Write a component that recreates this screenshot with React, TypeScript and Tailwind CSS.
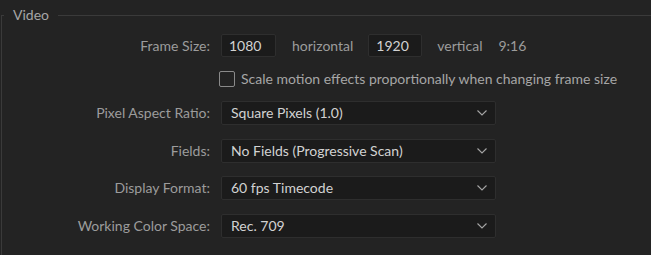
import React from "react";

function Chevron() {
  return (
    <svg width="10" height="6" viewBox="0 0 10 6" fill="none" className="shrink-0">
      <path d="M0.5 0.5 L5 5 L9.5 0.5" stroke="#a5a5a5" strokeWidth="1.1" />
    </svg>
  );
}

function Row({ label, value, className }: { label: string; value: string; className: string }) {
  return (
    <div className={`flex items-center h-[24px] ${className}`}>
      <div className="w-[208px] text-right text-[#9c9c9c]">{label}</div>
      <div className="ml-[11px] w-[275px] h-[24px] flex items-center justify-between bg-[#1b1b1b] border border-[#2e2e2e] rounded-[2px] pl-[9px] pr-[8px] text-[#d2d2d2]">
        <span>{value}</span>
        <Chevron />
      </div>
    </div>
  );
}

export default function App() {
  return (
    <div
      className="w-[651px] h-[255px] bg-[#232323] overflow-hidden text-[14px] leading-[20px]"
      style={{ fontFamily: "Lato, 'Liberation Sans', sans-serif" }}
    >
      <fieldset className="mt-[5px] ml-[1px] border-t border-l border-[#3a3a3a] h-[260px]">
        <legend className="ml-[2px] px-[9px] text-[#a6a6a6] leading-[20px]">Video</legend>
        <div className="flex items-center h-[23px] mt-[9px]">
          <div className="w-[208px] text-right text-[#9c9c9c]">Frame Size:</div>
          <div className="ml-[11px] w-[55px] h-[23px] bg-[#1b1b1b] border border-[#2e2e2e] rounded-[2px] pl-[7px] flex items-center text-[#d2d2d2]">
            1080
          </div>
          <div className="ml-[16px] text-[#9c9c9c]">horizontal</div>
          <div className="ml-[15px] w-[54px] h-[23px] bg-[#1b1b1b] border border-[#2e2e2e] rounded-[2px] pl-[7px] flex items-center text-[#d2d2d2]">
            1920
          </div>
          <div className="ml-[15px] text-[#9c9c9c]">vertical</div>
          <div className="ml-[16px] text-[#9c9c9c]">9:16</div>
        </div>
        <div className="flex items-center h-[16px] mt-[14px]">
          <div className="ml-[217px] w-[16px] h-[16px] border border-[#8a8a8a] rounded-[2px] bg-[#232323]" />
          <div className="ml-[6px] text-[#a6a6a6]">
            Scale motion effects proportionally when changing frame size
          </div>
        </div>
        <Row label="Pixel Aspect Ratio:" value="Square Pixels (1.0)" className="mt-[14px]" />
        <Row label="Fields:" value="No Fields (Progressive Scan)" className="mt-[14px]" />
        <Row label="Display Format:" value="60 fps Timecode" className="mt-[13px]" />
        <Row label="Working Color Space:" value="Rec. 709" className="mt-[14px]" />
      </fieldset>
    </div>
  );
}
